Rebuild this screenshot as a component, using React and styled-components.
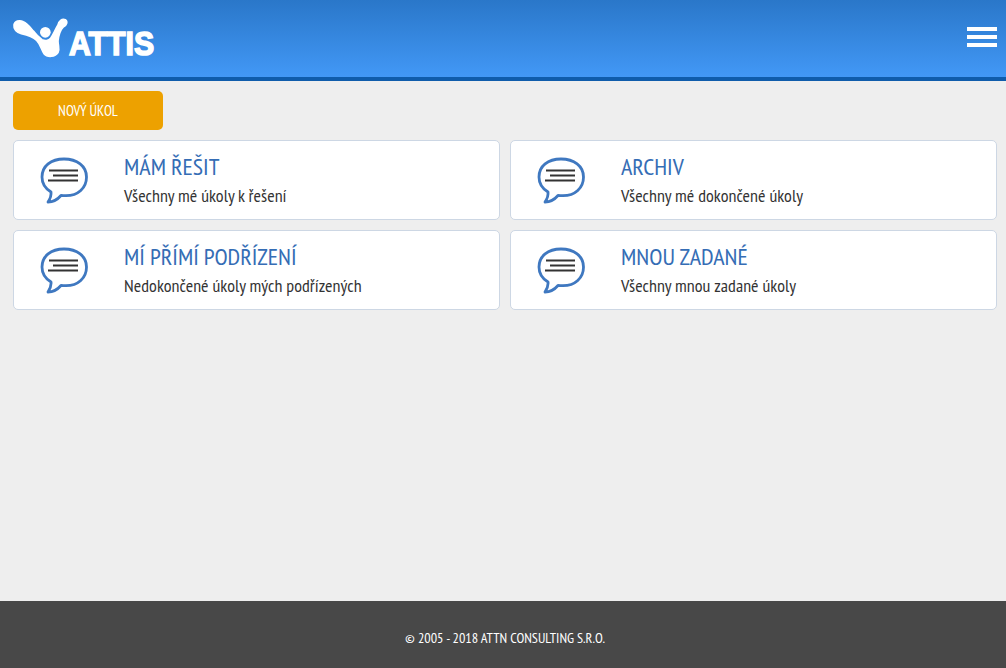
import styled, { createGlobalStyle } from 'styled-components'

const narrow = `"PT Sans Narrow", "Liberation Sans Narrow", "Liberation Sans", sans-serif`

const GlobalStyle = createGlobalStyle`
  html, body {
    margin: 0;
    padding: 0;
    height: 100%;
  }
  body {
    background: #eeeeee;
    font-family: ${narrow};
  }
`

const Page = styled.div`
  display: flex;
  flex-direction: column;
  height: 668px;
`

const Header = styled.header`
  flex: none;
  height: 77px;
  border-bottom: 4px solid #0f5cab;
  background: linear-gradient(to bottom, #2a77c9, #4298f6);
  display: flex;
  align-items: center;
  justify-content: space-between;
  padding: 0 9px 0 8px;
`

const Logo = styled.div`
  display: flex;
  align-items: center;
  margin-top: -1px;
`

const LogoText = styled.span`
  font-family: "Liberation Sans", Arial, sans-serif;
  font-weight: 700;
  font-size: 34px;
  line-height: 34px;
  color: #fff;
  -webkit-text-stroke: 1.6px #fff;
  margin: 10px 0 0 -9px;
  transform: scaleX(0.89);
  transform-origin: left center;
`

const Burger = styled.div`
  display: flex;
  flex-direction: column;
  gap: 4px;
  margin-top: -3px;
  span {
    display: block;
    width: 30px;
    height: 4px;
    background: #fff;
  }
`

const Main = styled.main`
  flex: 1;
  padding: 10px 9px 0 13px;
`

const NewButton = styled.div`
  width: 150px;
  height: 39px;
  padding-bottom: 1px;
  box-sizing: border-box;
  border-radius: 5px;
  background: #eda100;
  color: #fff;
  font-size: 14.5px;
  display: flex;
  align-items: center;
  justify-content: center;
  text-transform: uppercase;
  margin-bottom: 10px;
`

const Grid = styled.div`
  display: grid;
  grid-template-columns: 487px 487px;
  grid-auto-rows: 80px;
  gap: 10px;
`

const Card = styled.div`
  box-sizing: border-box;
  background: #fff;
  border: 1px solid #cdd7e4;
  border-radius: 5px;
  display: flex;
  align-items: flex-start;
`

const IconBox = styled.div`
  flex: none;
  width: 110px;
  padding: 16px 0 0 26px;
  box-sizing: border-box;
  svg {
    display: block;
  }
`

const CardText = styled.div`
  padding-top: 11px;
`

const CardTitle = styled.div`
  font-size: 24px;
  line-height: 30px;
  color: #356db5;
  text-transform: uppercase;
`

const CardSub = styled.div`
  font-size: 18px;
  line-height: 22px;
  margin-top: 3px;
  color: #333;
  letter-spacing: 0.05px;
`

const Footer = styled.footer`
  flex: none;
  height: 67px;
  background: #484848;
  color: #fff;
  font-size: 14.2px;
  display: flex;
  align-items: center;
  justify-content: center;
  padding-left: 4px;
  padding-top: 6px;
  box-sizing: border-box;
  text-transform: uppercase;
`

const LogoMark = () => (
  <svg width="70" height="55" viewBox="0 0 210 165">
    <path
      d="M18 42 C20 30 34 26 46 32 C60 38 68 52 78 62 C84 70 92 78 102 86 C110 90 122 90 128 82 C136 70 142 55 150 42 C152 30 162 22 172 26 C180 32 176 44 166 48 C158 56 152 72 150 90 C150 105 156 115 150 125 C142 138 118 140 108 128 C100 115 98 100 86 88 C74 76 60 72 40 68 C26 64 16 54 18 42 Z"
      fill="#fff"
      stroke="#fff"
      strokeWidth="5"
      strokeLinejoin="round"
    />
    <circle cx="112" cy="64" r="16" fill="#fff" />
  </svg>
)

const BubbleIcon = () => (
  <svg width="50" height="48" viewBox="0 0 50 48">
    <path
      d="M24 2 C11 2 2 9 2 20 C2 27 6 32 11 35 C11.5 39 10 42 8 45 C13 45 18 42 21 38.5 C23 38.7 24 38.7 26 38.7 C38 38.7 46.5 31 46.5 20 C46.5 9 37 2 24 2 Z"
      fill="none"
      stroke="#3f78c0"
      strokeWidth="2.8"
      strokeLinejoin="round"
    />
    <path d="M9 13.5 H38 M13 18.5 H38 M8 23.5 H38" stroke="#333" strokeWidth="1.8" />
  </svg>
)

const items = [
  { title: 'Mám řešit', sub: 'Všechny mé úkoly k řešení' },
  { title: 'Archiv', sub: 'Všechny mé dokončené úkoly' },
  { title: 'Mí přímí podřízení', sub: 'Nedokončené úkoly mých podřízených' },
  { title: 'Mnou zadané', sub: 'Všechny mnou zadané úkoly' },
]

export default function App() {
  return (
    <Page>
      <GlobalStyle />
      <Header>
        <Logo>
          <LogoMark />
          <LogoText>ATTIS</LogoText>
        </Logo>
        <Burger>
          <span />
          <span />
          <span />
        </Burger>
      </Header>
      <Main>
        <NewButton>Nový úkol</NewButton>
        <Grid>
          {items.map((item) => (
            <Card key={item.title}>
              <IconBox>
                <BubbleIcon />
              </IconBox>
              <CardText>
                <CardTitle>{item.title}</CardTitle>
                <CardSub>{item.sub}</CardSub>
              </CardText>
            </Card>
          ))}
        </Grid>
      </Main>
      <Footer>© 2005 - 2018 ATTN Consulting s.r.o.</Footer>
    </Page>
  )
}
